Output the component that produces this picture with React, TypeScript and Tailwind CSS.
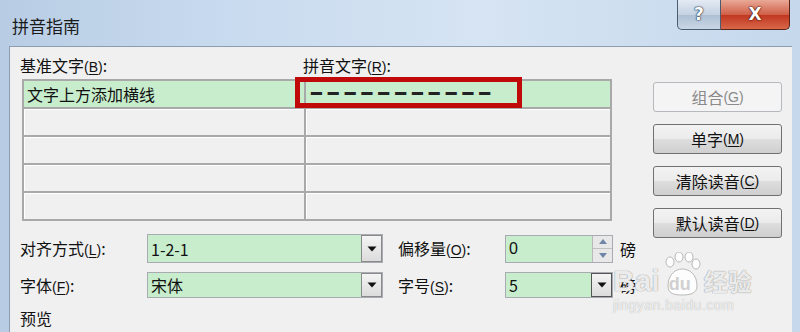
import React from "react";

const F = { fontFamily: '"Noto Sans CJK SC", "Noto Sans", sans-serif' };

function M({ c }: { c: string }) {
  return (
    <span className="font-['Liberation_Sans'] text-[14px]">
      (<span className="underline underline-offset-2">{c}</span>)
    </span>
  );
}

function Arrow() {
  return (
    <svg width="10" height="6" viewBox="0 0 10 6">
      <path d="M0.5 0.5 L9.5 0.5 L5 5.5 Z" fill="#111" />
    </svg>
  );
}

function Combo({ value, w, focus }: { value: string; w: string; focus?: boolean }) {
  return (
    <div className={`flex h-full ${w} border border-[#a8abb2] bg-[#c7edcc]`}>
      <div className="flex flex-1 items-center pl-[3px] text-[16px] text-[#111]">{value}</div>
      <div
        className={`flex w-[21px] items-center justify-center border ${
          focus ? "border-[#555]" : "border-[#8a8a8a]"
        } bg-[linear-gradient(#f4f4f4,#dcdcdc)]`}
      >
        <Arrow />
      </div>
    </div>
  );
}

function Btn({ children, disabled }: { children: React.ReactNode; disabled?: boolean }) {
  return (
    <div
      className={`flex h-[30px] w-[129px] items-center justify-center rounded-[3px] border text-[16px] ${
        disabled
          ? "border-[#b5b9bd] bg-[#f4f4f4] text-[#8a8a8a]"
          : "border-[#707070] bg-[linear-gradient(#f3f3f3_0%,#ebebeb_48%,#dddddd_52%,#cfcfcf_100%)] text-[#111]"
      }`}
    >
      {children}
    </div>
  );
}

export default function App() {
  const rows = [0, 1, 2, 3, 4];
  return (
    <div
      style={F}
      className="relative flex h-[332px] w-[800px] flex-col overflow-hidden bg-[linear-gradient(90deg,#b8cde4_0%,#c9dbef_30%,#d6e4f3_60%,#c5d8ec_100%)] text-[#111]"
    >
      {/* title bar */}
      <div className="flex h-[46px] shrink-0 items-start justify-between">
        <div className="pl-[12px] pt-[15px] text-[17px] leading-[22px] text-[#1a1a1a]">拼音指南</div>
        <div className="mr-[10px] flex h-[30px]">
          <div className="flex w-[44px] items-center justify-center rounded-bl-[5px] border border-t-0 border-[#4b5b70] bg-[linear-gradient(#e3eaf3,#c4d2e2_50%,#aebfd4_51%,#c9d6e6)]">
            <span className="font-['DejaVu_Sans'] text-[17px] font-bold text-white [text-shadow:0_0_1px_#25364b,0_0_1px_#25364b,0_0_2px_#25364b]">?</span>
          </div>
          <div className="flex w-[69px] items-center justify-center rounded-br-[5px] border border-l-0 border-t-0 border-[#5a2418] bg-[linear-gradient(#e9a996,#d0604a_50%,#c0361e_51%,#d8674a)]">
            <span className="font-['DejaVu_Sans'] text-[17px] font-bold text-white [text-shadow:0_0_1px_#4a140a,0_0_1px_#4a140a,0_0_2px_#4a140a]">X</span>
          </div>
        </div>
      </div>

      {/* body */}
      <div className="flex min-h-0 flex-1 pl-[9px] pr-[8px]">
        <div className="relative flex flex-1 items-start border-l border-t border-[#8d9cae] bg-[#f0f0f0]">
          {/* left column */}
          <div className="flex w-[633px] shrink-0 flex-col">
            <div className="flex h-[32px] items-end pb-[2px] leading-[20px]">
              <div className="w-[293px] pl-[10px] text-[16px]">
                基准文字<M c="B" />:
              </div>
              <div className="text-[16px]">
                拼音文字<M c="R" />:
              </div>
            </div>
            <div className="relative ml-[12px] grid w-[590px] grid-cols-[280px_1fr] gap-[2px] bg-[#a9a9a9] p-[2px]">
              {rows.map((r) => (
                <React.Fragment key={r}>
                  <div
                    className={`flex h-[26px] items-center pl-[3px] text-[16px] ${
                      r === 0 ? "bg-[#c7edcc]" : "bg-[#f0f0f0] border-t border-l border-white"
                    }`}
                  >
                    {r === 0 ? "文字上方添加横线" : ""}
                  </div>
                  <div
                    className={`flex h-[26px] items-center pl-[5px] ${
                      r === 0 ? "bg-[#c7edcc]" : "bg-[#f0f0f0] border-t border-l border-white"
                    }`}
                  >
                    {r === 0 ? (
                      <span className="font-['DejaVu_Sans_Mono'] text-[18px] leading-[20px] tracking-[6px] text-[#222]">
                        ━━━━━━━━━━━
                      </span>
                    ) : null}
                  </div>
                </React.Fragment>
              ))}
              {/* red highlight */}
              <div className="absolute left-[273px] top-[-2px] h-[31px] w-[227px] border-[5px] border-[#c00a0a]" />
            </div>

            {/* bottom rows */}
            <div className="mt-[13px] flex h-[29px] items-center pl-[10px] text-[16px]">
              <div className="w-[127px]">
                对齐方式<M c="L" />:
              </div>
              <Combo value="1-2-1" w="w-[236px]" />
              <div className="ml-[15px] w-[107px]">
                偏移量<M c="O" />:
              </div>
              <div className="flex h-[28px] w-[108px] border border-[#a8abb2] bg-[#c7edcc]">
                <div className="flex flex-1 items-center pl-[3px] font-['Liberation_Sans'] text-[16px]">0</div>
                <div className="flex w-[20px] flex-col border-l border-[#b8b8b8] bg-[#e8e8e8]">
                  <div className="flex flex-1 items-center justify-center border-b border-[#c0c0c0]">
                    <svg width="8" height="5" viewBox="0 0 8 5"><path d="M0 5 L4 0 L8 5 Z" fill="#6f86a8" /></svg>
                  </div>
                  <div className="flex flex-1 items-center justify-center">
                    <svg width="8" height="5" viewBox="0 0 8 5"><path d="M0 0 L8 0 L4 5 Z" fill="#6f86a8" /></svg>
                  </div>
                </div>
              </div>
              <div className="ml-[7px]">磅</div>
            </div>
            <div className="mt-[9px] flex h-[26px] items-center pl-[10px] text-[16px]">
              <div className="w-[127px]">
                字体<M c="F" />:
              </div>
              <Combo value="宋体" w="w-[236px]" />
              <div className="ml-[15px] w-[107px]">
                字号<M c="S" />:
              </div>
              <Combo value="5" w="w-[108px]" focus />
              <div className="ml-[7px]">磅</div>
            </div>
            <div className="mt-[9px] pl-[10px] text-[16px] leading-[22px]">预览</div>
          </div>

          {/* buttons */}
          <div className="ml-[10px] flex flex-col gap-[12px] pt-[35px]">
            <Btn disabled>
              组合<M c="G" />
            </Btn>
            <Btn>
              单字<M c="M" />
            </Btn>
            <Btn>
              清除读音<M c="C" />
            </Btn>
            <Btn>
              默认读音<M c="D" />
            </Btn>
          </div>

          {/* watermark */}
          <div className="pointer-events-none absolute left-[603px] top-[205px] flex flex-col items-start text-white/80">
            <div className="flex items-end">
              <span className="font-['Liberation_Sans'] text-[30px] font-bold leading-[30px] [text-shadow:0_0_1px_#9a9a9a,0_0_1px_#9a9a9a]">Bai</span>
              <div className="relative mx-[2px] h-[44px] w-[40px]">
                <svg width="40" height="44" viewBox="0 0 40 44" className="absolute left-0 top-0">
                  <g fill="rgba(255,255,255,0.85)" stroke="#a8a8a8" strokeWidth="0.8">
                    <ellipse cx="8" cy="10" rx="4" ry="5" />
                    <ellipse cx="17" cy="5" rx="4" ry="5" />
                    <ellipse cx="27" cy="5" rx="4" ry="5" />
                    <ellipse cx="34" cy="12" rx="4" ry="5" />
                    <path d="M6 34 C6 22 14 17 20 17 C27 17 35 22 35 34 C35 42 27 43 20 43 C13 43 6 42 6 34 Z" />
                  </g>
                </svg>
                <span className="absolute bottom-[3px] left-[7px] font-['Liberation_Sans'] text-[18px] font-bold leading-[18px] text-[#d0d0d0]">du</span>
              </div>
              <span className="text-[24px] font-bold leading-[30px] [text-shadow:0_0_1px_#9a9a9a,0_0_1px_#9a9a9a]">经验</span>
            </div>
            <span className="font-['Liberation_Sans'] text-[14px] leading-[18px] tracking-[0.5px] [text-shadow:0_0_1px_#9a9a9a]">jingyan.baidu.com</span>
          </div>
        </div>
      </div>
    </div>
  );
}
